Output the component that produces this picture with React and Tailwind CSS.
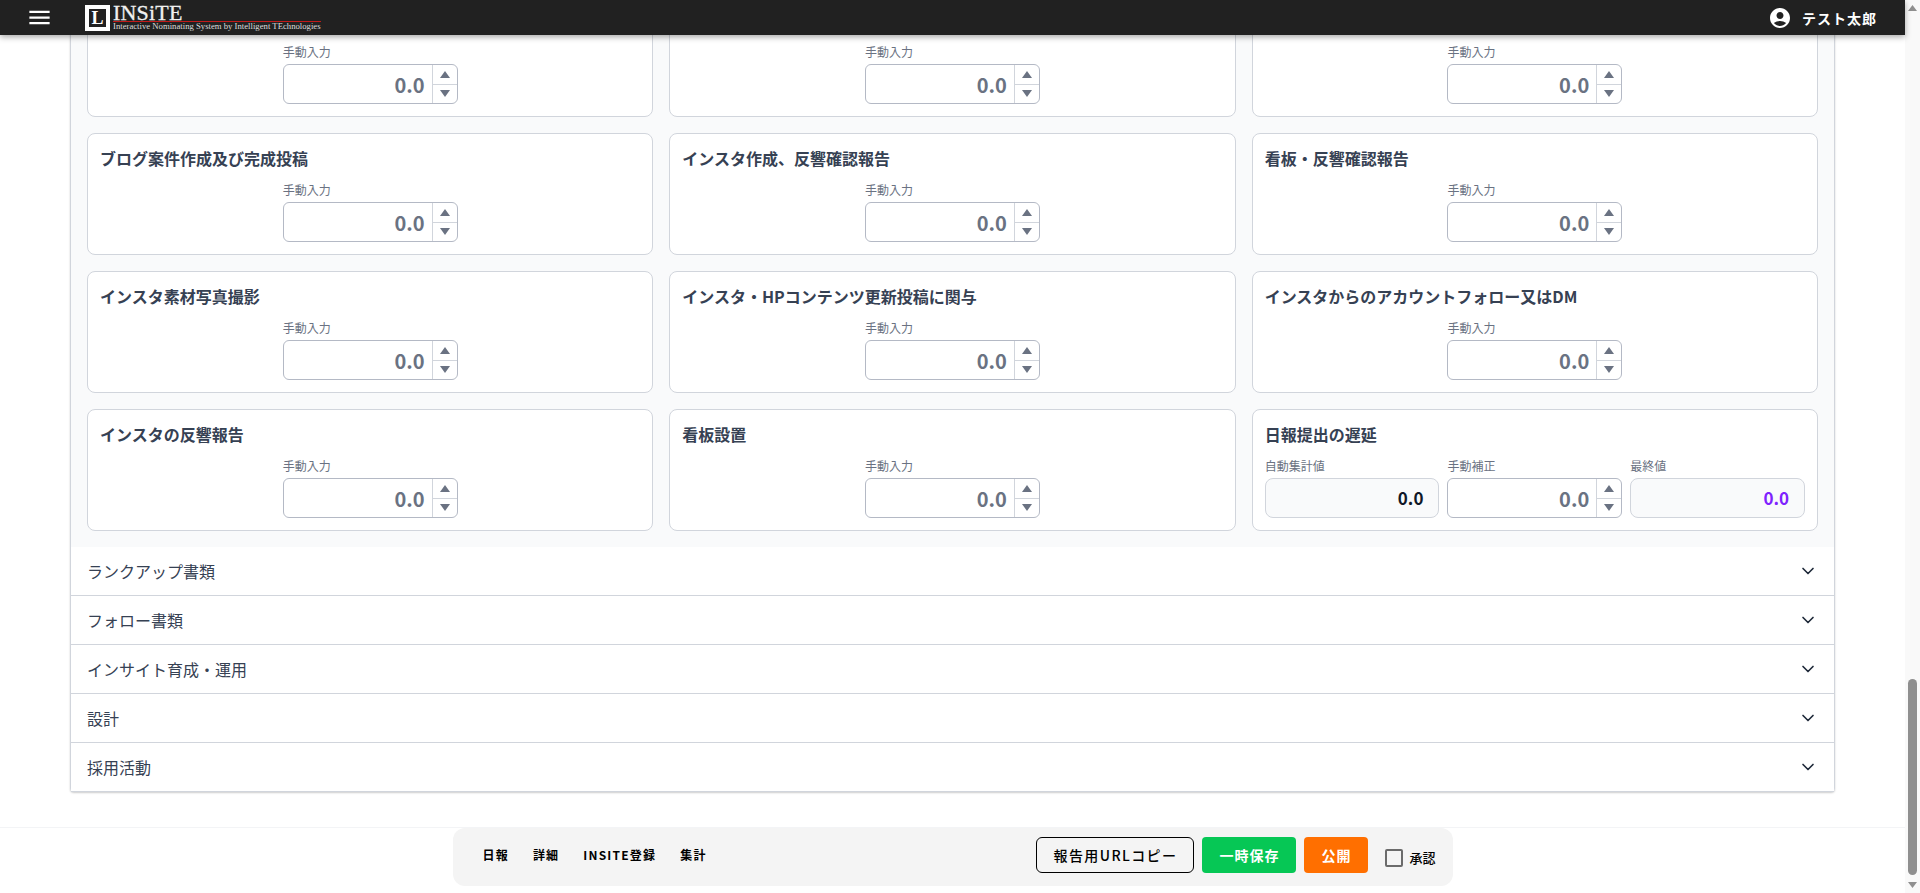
import React from 'react';
import { ChevronDown } from 'lucide-react';

const cards = [
    '\u00a0', '\u00a0', '\u00a0',
    'ブログ案件作成及び完成投稿', 'インスタ作成、反響確認報告', '看板・反響確認報告',
    'インスタ素材写真撮影', 'インスタ・HPコンテンツ更新投稿に関与', 'インスタからのアカウントフォロー又はDM',
    'インスタの反響報告', '看板設置',
];

const sections = ['ランクアップ書類', 'フォロー書類', 'インサイト育成・運用', '設計', '採用活動'];
const tabs = ['日報', '詳細', 'INSITE登録', '集計'];

const Triangle = ({ down, className }) => (
    <svg viewBox="0 0 10 8" preserveAspectRatio="none" className={className} fill="currentColor">
        <polygon points={down ? '0,0 10,0 5,8' : '5,0 10,8 0,8'} />
    </svg>
);

const NumberBox = () => (
    <div className="flex h-10 rounded-md border border-[#b4b9c5] bg-white overflow-hidden">
        <input
            readOnly
            value="0.0"
            className="min-w-0 flex-1 pr-[7px] pt-[2px] text-right text-xl font-semibold text-gray-500 outline-none"
        />
        <div className="flex w-[25px] flex-col border-l border-gray-300 text-gray-500">
            <button className="flex flex-1 items-center justify-center border-b border-gray-300">
                <Triangle className="h-[7px] w-[10px]" />
            </button>
            <button className="flex flex-1 items-center justify-center">
                <Triangle down className="h-[7px] w-[10px]" />
            </button>
        </div>
    </div>
);

const Label = ({ children }) => (
    <div className="mb-[3px] h-[18px] text-xs leading-[18px] text-gray-500">{children}</div>
);

const ReadOnlyBox = ({ className }) => (
    <div className={`flex h-10 items-center justify-end rounded-lg border border-gray-300 bg-gray-50 pr-[15px] text-[17px] font-semibold ${className}`}>
        0.0
    </div>
);

const Card = ({ title, children }) => (
    <div className="h-[122px] rounded-lg border border-gray-300 bg-white p-3">
        <h3 className="mb-2 h-[27px] text-base font-bold leading-[25px] text-gray-700">{title}</h3>
        <div className="grid grid-cols-3 gap-2">{children}</div>
    </div>
);

const Logo = () => (
    <div className="flex items-center gap-[3px] font-['Liberation_Serif',serif] text-white">
        <div className="flex h-[26px] w-[25px] items-center justify-center border-[4px] border-white bg-[#212121]">
            <span className="text-[18px] font-bold leading-none">L</span>
        </div>
        <div className="flex flex-col">
            <span className="block h-[17px] text-[22px] leading-[17px] tracking-[0.2px] text-[#f0f0f0] [-webkit-text-stroke:0.3px_#f0f0f0]">INSiTE</span>
            <span className="block border-t border-[#c21a1a] text-[8.7px] leading-[9px] text-[#dddddd]">
                Interactive Nominating System by Intelligent TEchnologies
            </span>
        </div>
    </div>
);

const App = () => {
    return (
        <div className="flex h-screen overflow-hidden bg-white font-['Noto_Sans_CJK_JP',sans-serif]">
            <div className="relative flex min-w-0 flex-1 flex-col">
                <header className="absolute inset-x-0 top-0 z-10 flex h-[35px] items-center bg-[#212121] shadow-[0_2px_6px_rgba(0,0,0,0.35)]">
                    <svg viewBox="0 0 24 24" className="ml-[26px] h-[27px] w-[27px]" fill="white">
                        <path d="M3 18h18v-2H3v2zm0-5h18v-2H3v2zm0-7v2h18V6H3z" />
                    </svg>
                    <div className="ml-[32px]">
                        <Logo />
                    </div>
                    <div className="ml-auto mr-[28px] flex items-center gap-[10px] text-white">
                        <svg viewBox="0 0 24 24" className="h-6 w-6" fill="white">
                            <path d="M12 2C6.48 2 2 6.48 2 12s4.48 10 10 10 10-4.48 10-10S17.52 2 12 2zm0 4c1.93 0 3.5 1.57 3.5 3.5S13.93 13 12 13s-3.5-1.57-3.5-3.5S10.07 6 12 6zm0 14c-2.03 0-4.43-.82-6.14-2.88C7.55 15.8 9.68 15 12 15s4.45.8 6.14 2.12C16.43 19.18 14.03 20 12 20z" />
                        </svg>
                        <span className="text-sm font-bold tracking-[1px]">テスト太郎</span>
                    </div>
                </header>

                <main className="min-h-0 flex-1 overflow-hidden px-[70px]">
                    <div className="-mt-[21px] rounded-b border-x border-gray-300 shadow-[0_1px_2px_rgba(0,0,0,0.2)]">
                        <div className="grid grid-cols-3 gap-4 bg-gray-50 p-4">
                            {cards.map((title, i) => (
                                <Card key={i} title={title}>
                                    <div className="col-start-2">
                                        <Label>手動入力</Label>
                                        <NumberBox />
                                    </div>
                                </Card>
                            ))}
                            <Card title="日報提出の遅延">
                                <div>
                                    <Label>自動集計値</Label>
                                    <ReadOnlyBox className="text-gray-900" />
                                </div>
                                <div>
                                    <Label>手動補正</Label>
                                    <NumberBox />
                                </div>
                                <div>
                                    <Label>最終値</Label>
                                    <ReadOnlyBox className="text-violet-600" />
                                </div>
                            </Card>
                        </div>
                        <div className="bg-white">
                            {sections.map((name) => (
                                <div key={name} className="flex h-[49px] items-center justify-between border-b border-gray-300 px-4 text-base text-gray-700">
                                    <span>{name}</span>
                                    <ChevronDown size={20} strokeWidth={2} className="text-gray-800" />
                                </div>
                            ))}
                        </div>
                    </div>
                </main>

                <footer className="h-[66px] shrink-0 border-t border-gray-100 bg-white">
                    <div className="mx-auto flex h-[58px] w-[1000px] items-center justify-between rounded-xl bg-[#f4f4f4] pb-[4px] pl-[30px] pr-[17px]">
                        <nav className="flex items-center gap-[24px] text-xs font-bold tracking-[1.2px] text-black">
                            {tabs.map((tab) => (
                                <span key={tab}>{tab}</span>
                            ))}
                        </nav>
                        <div className="flex items-center">
                            <button className="h-9 w-[158px] rounded-md border border-black text-sm font-medium tracking-[1.4px] text-black">
                                報告用URLコピー
                            </button>
                            <button className="ml-2 h-9 w-[94px] rounded bg-[#06c755] text-sm font-bold tracking-[1px] text-white">
                                一時保存
                            </button>
                            <button className="ml-2 h-9 w-[64px] rounded bg-[#ff6f00] text-sm font-bold tracking-[1px] text-white">
                                公開
                            </button>
                            <span className="ml-[17px] mt-[6px] h-[18px] w-[18px] rounded-[2px] border-2 border-[#6b6b6b]" />
                            <span className="ml-[6px] mt-[6px] text-[13px] font-medium text-black">承認</span>
                        </div>
                    </div>
                </footer>
            </div>

            <div className="flex w-[15px] shrink-0 flex-col items-center bg-[#f9f9f9] text-[#8f8f8f]">
                <Triangle className="mt-[5px] h-[6px] w-[9px]" />
                <div className="flex-1 w-[9px] pt-[668px]">
                    <div className="h-[196px] rounded-full bg-[#8f8f8f]" />
                </div>
                <Triangle down className="mb-[5px] h-[6px] w-[9px]" />
            </div>
        </div>
    );
};

export default App;
